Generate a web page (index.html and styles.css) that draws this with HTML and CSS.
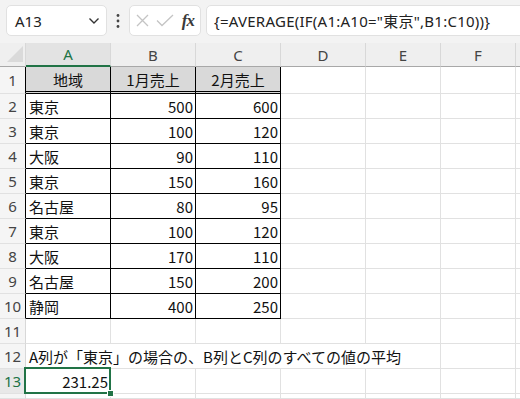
FILE: index.html
```html
<!DOCTYPE html>
<html lang="ja">
<head>
    <meta charset="UTF-8">
    <title>AVERAGE IF</title>
    <link rel="stylesheet" href="styles.css">
</head>
<body>
    <div class="formula-bar">
        <div class="name-box">
            <span>A13</span>
            <svg class="chevron" width="12" height="8" viewBox="0 0 12 8"><polyline points="1.5,1.5 6,6 10.5,1.5" fill="none" stroke="#333" stroke-width="1.4"/></svg>
        </div>
        <div class="grip">
            <svg width="4" height="16" viewBox="0 0 4 16"><circle cx="2" cy="2.5" r="1.4" fill="#444"/><circle cx="2" cy="8" r="1.4" fill="#444"/><circle cx="2" cy="13.5" r="1.4" fill="#444"/></svg>
        </div>
        <div class="fx-box">
            <svg width="13" height="13" viewBox="0 0 13 13"><path d="M1 1 L12 12 M12 1 L1 12" stroke="#c4c4c4" stroke-width="1.3" fill="none"/></svg>
            <svg width="18" height="13" viewBox="0 0 18 13"><polyline points="1,6.5 6,11.5 17,1" stroke="#c4c4c4" stroke-width="1.3" fill="none"/></svg>
            <span class="fx">fx</span>
        </div>
        <div class="formula">{=AVERAGE(IF(A1:A10="東京",B1:C10))}</div>
    </div>

    <div class="sheet" id="sheet"></div>

    <script>
        const cols = ['A', 'B', 'C', 'D', 'E', 'F', ''];
        const table = [
            ['地域', '1月売上', '2月売上'],
            ['東京', 500, 600],
            ['東京', 100, 120],
            ['大阪', 90, 110],
            ['東京', 150, 160],
            ['名古屋', 80, 95],
            ['東京', 100, 120],
            ['大阪', 170, 110],
            ['名古屋', 150, 200],
            ['静岡', 400, 250]
        ];

        function addCell(parent, cls, text) {
            const div = document.createElement('div');
            div.className = cls;
            if (text !== undefined) div.textContent = text;
            parent.appendChild(div);
            return div;
        }

        document.addEventListener('DOMContentLoaded', function() {
            const sheet = document.getElementById('sheet');

            const corner = addCell(sheet, 'corner');
            corner.innerHTML = '<svg width="16" height="16" viewBox="0 0 16 16"><polygon points="16,0 16,16 0,16" fill="#dadada"/></svg>';
            cols.forEach(function(c, i) {
                addCell(sheet, 'col-head' + (i === 0 ? ' active' : ''), c);
            });

            // row 14 is only a sliver at the bottom edge, its number is out of view
            for (let r = 1; r <= 14; r++) {
                const inTable = r <= 10;
                addCell(sheet, 'row-head' + (inTable ? ' edge' : '') + (r === 13 ? ' active' : ''), r < 14 ? r : undefined);

                if (r === 12) {
                    addCell(sheet, 'cell note', 'A列が「東京」の場合の、B列とC列のすべての値の平均');
                    addCell(sheet, 'cell');
                    addCell(sheet, 'cell');
                    continue;
                }

                for (let c = 0; c < 7; c++) {
                    let cls = 'cell';
                    let text;
                    if (inTable && c < 3) {
                        cls += ' boxed';
                        text = table[r - 1][c];
                        if (r === 1) cls += ' title';
                        else if (c > 0) cls += ' num';
                    }
                    if (r === 13 && c === 0) {
                        cls += ' num selected';
                        text = '231.25';
                    }
                    addCell(sheet, cls, text);
                }
            }
        });
    </script>
</body>
</html>
```

FILE: styles.css
```css
body {
    margin: 0;
    width: 520px;
    height: 399px;
    overflow: hidden;
    background-color: #ffffff;
    font-family: "Noto Sans", "Noto Sans CJK JP", sans-serif;
}
.formula-bar {
    display: flex;
    align-items: flex-start;
    height: 43px;
    box-sizing: border-box;
    padding: 5px 0 0 6px;
    background-color: #f3f3f3;
}
.name-box,
.fx-box,
.formula {
    height: 31px;
    box-sizing: border-box;
    background-color: #ffffff;
    border: 1px solid #e1e1e1;
    border-radius: 5px;
    display: flex;
    align-items: center;
}
.name-box {
    width: 101px;
    padding: 0 6px 0 8px;
    justify-content: space-between;
    font-size: 15px;
    color: #222;
}
.chevron {
    margin-top: 1px;
}
.grip {
    width: 22px;
    height: 31px;
    display: flex;
    align-items: center;
    justify-content: center;
}
.fx-box {
    width: 72px;
    padding: 0 4px 0 6px;
    justify-content: space-between;
}
.fx {
    font-family: "Liberation Serif", serif;
    font-style: italic;
    font-weight: bold;
    font-size: 17px;
    color: #3a3a3a;
    letter-spacing: -1px;
    padding-right: 2px;
}
.formula {
    flex-grow: 1;
    margin: 0 -10px 0 5px;
    padding-left: 7px;
    font-size: 15px;
    letter-spacing: 0.25px;
    color: #222;
    white-space: nowrap;
}
.sheet {
    display: grid;
    grid-template-columns: 26px 85px 85px 85px 85px 75px 75px 1fr;
    grid-template-rows: 24px 27px repeat(12, 25px) 1fr;
    height: 356px;
}
.corner,
.col-head,
.row-head,
.cell {
    box-sizing: border-box;
    display: flex;
    align-items: center;
    white-space: nowrap;
}
.corner {
    background-color: #efefef;
    border-right: 1px solid #d8d8d8;
    border-bottom: 1px solid #a8a8a8;
    padding: 0 0 4px 7px;
    align-items: flex-end;
}
.col-head {
    justify-content: center;
    background-color: #efefef;
    border-right: 1px solid #d8d8d8;
    border-bottom: 1px solid #a8a8a8;
    font-size: 15px;
    color: #444;
}
.col-head.active {
    background-color: #e3e3e3;
    color: #217346;
    border-bottom: 2px solid #217346;
}
.row-head {
    justify-content: center;
    background-color: #f5f5f5;
    border-right: 1px solid #d8d8d8;
    border-bottom: 1px solid #e1e1e1;
    font-size: 15px;
    color: #444;
}
.row-head.edge {
    border-right-color: #000;
}
.row-head.active {
    color: #217346;
    background-color: #e8e8e8;
}
.cell {
    border-right: 1px solid #e1e1e1;
    border-bottom: 1px solid #e1e1e1;
    padding: 0 3px;
    font-family: "Noto Sans CJK JP", sans-serif;
    font-size: 15px;
    color: #111;
}
.cell.boxed {
    border-right-color: #000;
    border-bottom-color: #000;
}
.cell.title {
    justify-content: center;
    background-color: #d9d9d9;
    border-bottom: 3px double #000;
}
.cell.num {
    justify-content: flex-end;
    padding-right: 2px;
}
.cell.note {
    grid-column: span 5;
}
.cell.selected {
    position: relative;
}
.cell.selected::after {
    content: "";
    position: absolute;
    left: -2px;
    top: -2px;
    right: -1px;
    bottom: -1px;
    border: 2px solid #217346;
}
.cell.selected::before {
    content: "";
    position: absolute;
    right: -4px;
    bottom: -4px;
    width: 5px;
    height: 5px;
    background-color: #217346;
    border: 1px solid #fff;
    z-index: 1;
}
```
